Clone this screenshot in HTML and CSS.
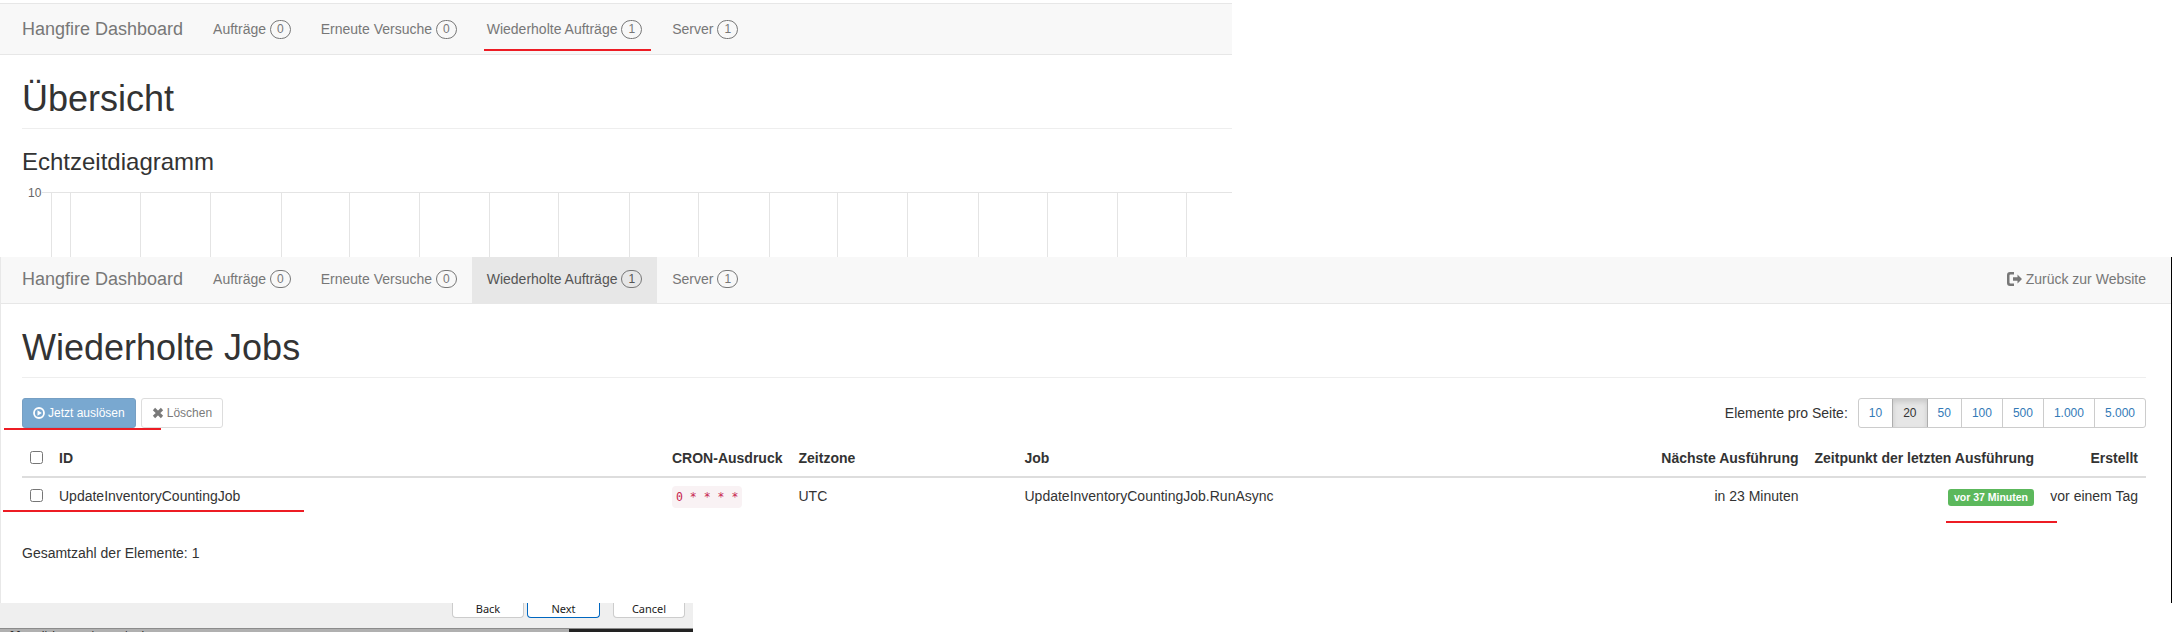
FILE: index.html
```html
<!DOCTYPE html>
<html lang="de">
<head>
<meta charset="utf-8">
<title>Hangfire Dashboard</title>
<link rel="stylesheet" href="styles.css">
</head>
<body>
<div class="canvas">
  <section class="shot shot-top">
    <nav class="navbar navbar-tall">
      <a class="brand">Hangfire Dashboard</a>
      <ul class="nav">
        <li><a>Aufträge <span class="metric">0</span></a></li>
        <li><a>Erneute Versuche <span class="metric">0</span></a></li>
        <li><a>Wiederholte Aufträge <span class="metric">1</span></a></li>
        <li><a>Server <span class="metric">1</span></a></li>
      </ul>
    </nav>
    <div class="content">
      <h1 class="page-title">Übersicht</h1>
      <h3 class="section-title">Echtzeitdiagramm</h3>
      <svg class="chart" width="1232" height="65" viewBox="0 0 1232 65">
        <text class="chart-label" x="28" y="4.500">10</text>
        <path class="chart-grid" d="M42 .5H1232M51.5 0V65M70.5 0V65M140.5 0V65M210.5 0V65M281.5 0V65M349.5 0V65M419.5 0V65M489.5 0V65M558.5 0V65M629.5 0V65M698.5 0V65M769.5 0V65M837.5 0V65M907.5 0V65M978.5 0V65M1047.5 0V65M1117.5 0V65M1186.5 0V65"/>
      </svg>
    </div>
  </section>

  <section class="shot shot-main">
    <nav class="navbar navbar-short">
      <a class="brand">Hangfire Dashboard</a>
      <ul class="nav">
        <li><a>Aufträge <span class="metric">0</span></a></li>
        <li><a>Erneute Versuche <span class="metric">0</span></a></li>
        <li class="active"><a>Wiederholte Aufträge <span class="metric">1</span></a></li>
        <li><a>Server <span class="metric">1</span></a></li>
      </ul>
      <a class="back-link">
        <svg class="icon-out" width="15" height="14" viewBox="0 0 15 14"><path d="M0 3a3 3 0 0 1 3-3h4v2.500H3.500a1 1 0 0 0-1 1v7a1 1 0 0 0 1 1H7V14H3a3 3 0 0 1-3-3z"/><path d="M6 5.200h4.500V2.500L15 7l-4.500 4.500V8.800H6z"/></svg>
        Zurück zur Website
      </a>
    </nav>
    <div class="content">
      <h1 class="page-title">Wiederholte Jobs</h1>
      <div class="toolbar">
        <div class="actions">
          <button class="btn btn-primary" type="button">
            <svg width="12" height="12" viewBox="0 0 12 12"><circle cx="6" cy="6" r="5" fill="none" stroke="#fff" stroke-width="1.8"/><path d="M4.500 3.200 8.800 6 4.500 8.800z" fill="#fff"/></svg>
            Jetzt auslösen
          </button>
          <button class="btn btn-default" type="button">
            <svg width="12" height="12" viewBox="0 0 12 12"><path d="M2 2l8 8M10 2l-8 8" stroke="#333" stroke-width="3.200" fill="none"/></svg>
            Löschen
          </button>
        </div>
        <div class="pager-wrap">
          <span class="pager-label">Elemente pro Seite:</span>
          <div class="pager">
            <a>10</a><a class="current">20</a><a>50</a><a>100</a><a>500</a><a>1.000</a><a>5.000</a>
          </div>
        </div>
      </div>
      <table class="jobs">
        <colgroup>
          <col class="c-check"><col class="c-id"><col class="c-cron"><col class="c-zone"><col class="c-job"><col class="c-next"><col class="c-last"><col class="c-made">
        </colgroup>
        <thead>
          <tr>
            <th><input type="checkbox"></th>
            <th>ID</th>
            <th>CRON-Ausdruck</th>
            <th>Zeitzone</th>
            <th>Job</th>
            <th class="right">Nächste Ausführung</th>
            <th class="right">Zeitpunkt der letzten Ausführung</th>
            <th class="right">Erstellt</th>
          </tr>
        </thead>
        <tbody>
          <tr>
            <td><input type="checkbox"></td>
            <td>UpdateInventoryCountingJob</td>
            <td><code>0 * * * *</code></td>
            <td>UTC</td>
            <td>UpdateInventoryCountingJob.RunAsync</td>
            <td class="right">in 23 Minuten</td>
            <td class="right"><span class="label-success">vor 37 Minuten</span></td>
            <td class="right">vor einem Tag</td>
          </tr>
        </tbody>
      </table>
      <p class="total">Gesamtzahl der Elemente: 1</p>
    </div>
  </section>

  <section class="dialog">
    <div class="dialog-actions">
      <button class="wiz" type="button">Back</button>
      <button class="wiz wiz-next" type="button">Next</button>
      <button class="wiz wiz-cancel" type="button">Cancel</button>
    </div>
    <div class="dialog-strip">
      <span class="strip-text">of free disk space is required.</span>
      <span class="strip-dark"></span>
    </div>
  </section>

  <i class="mark mark-nav"></i>
  <i class="mark mark-btn"></i>
  <i class="mark mark-row"></i>
  <i class="mark mark-label"></i>
</div>
</body>
</html>
```
FILE: styles.css
```css
* { box-sizing: border-box; }
html, body { margin: 0; background: #fff; }
body { font: 14px/20px "Liberation Sans", Arial, sans-serif; color: #333; }

.canvas { position: relative; width: 2172px; height: 632px; overflow: hidden; }

.shot { overflow: hidden; background: #fff; }
.shot-top { width: 1232px; height: 257px; padding-top: 3px; }
.shot-main { width: 2172px; height: 346px; border-left: 1px solid #e8e8e8; border-right: 1px solid #000; }

.navbar { display: flex; align-items: stretch; background: #f8f8f8; padding-left: 7px; border-bottom: 1px solid #e7e7e7; color: #777; }
.navbar-tall { height: 52px; border-top: 1px solid #e7e7e7; }
.navbar-short { height: 47px; padding-left: 6px; padding-right: 25px; }

.brand { display: flex; align-items: center; padding: 0 15px; font-size: 18px; }
.nav { display: flex; list-style: none; margin: 0; padding: 0; }
.nav li { display: flex; }
.nav a { display: flex; align-items: center; gap: 4px; padding: 0 15px; }
.navbar-short .brand, .navbar-short .nav a { padding-bottom: 3px; }
.active { background: #e7e7e7; }
.active a { color: #555; }
.metric { display: inline-block; height: 19px; padding: 0 6px; border: 1px solid #777; border-radius: 10px; font-size: 12px; line-height: 17px; }
.navbar-short .metric { height: 18px; line-height: 16px; }
.back-link { display: flex; align-items: center; gap: 4px; margin-left: auto; padding-bottom: 3px; }
.icon-out { fill: #777; }

.content { padding: 0 26px 0 22px; }
.shot-top .content { padding-right: 0; }
.shot-main .content { padding-left: 21px; padding-right: 25px; }

.page-title { margin: 24px 0 20px; padding-bottom: 9px; border-bottom: 1px solid #eee; font-size: 36px; font-weight: 400; line-height: 39.6px; }
.section-title { margin: 0 0 17px; font-size: 24px; font-weight: 400; line-height: 26.4px; }

.chart { display: block; margin-left: -22px; overflow: visible; }
.chart-grid { stroke: #e4e4e4; stroke-width: 1; fill: none; }
.chart-label { fill: #666; font-size: 12px; font-family: "Liberation Sans", Arial, sans-serif; }

.toolbar { display: flex; justify-content: space-between; margin-bottom: 12px; }
.actions { display: flex; gap: 5px; }
.btn { display: flex; align-items: center; gap: 3px; height: 30px; padding: 0 10px; border: 1px solid transparent; border-radius: 3px; font: 12px/18px "Liberation Sans", Arial, sans-serif; opacity: .65; }
.btn-primary { background: #337ab7; border-color: #2e6da4; color: #fff; }
.btn-default { background: #fff; border-color: #ccc; color: #333; }

.pager-wrap { display: flex; align-items: center; gap: 10px; }
.pager { display: flex; height: 30px; border: 1px solid #ccc; border-radius: 3px; font-size: 12px; color: #337ab7; }
.pager a { display: flex; align-items: center; padding: 0 10px; border-left: 1px solid #ccc; }
.pager a:first-child { border-left: 0; }
.pager .current { background: #e6e6e6; color: #333; border-left-color: #adadad; border-right: 1px solid #adadad; margin-right: -1px; box-shadow: inset 0 3px 5px rgba(0, 0, 0, .125); }
.pager .current + a { border-left: 0; padding-left: 11px; }

.jobs { width: 2124px; table-layout: fixed; border-collapse: collapse; }
.jobs th, .jobs td { padding: 8px; text-align: left; vertical-align: top; white-space: nowrap; }
.jobs th { border-bottom: 2px solid #ddd; font-weight: 700; }
.jobs .right { text-align: right; }
.jobs input { display: block; width: 13px; height: 13px; margin: 3px 0 0; }
.c-check { width: 29px; }
.c-id { width: 613px; }
.c-cron { width: 126.5px; }
.c-zone { width: 226px; }
.c-job { width: 634px; }
.c-next { width: 156px; }
.c-last { width: 235.500px; }
.c-made { width: 104px; }

code { padding: 4px 4px; border-radius: 4px; background: #f9f2f4; color: #c7254e; font: 11.500px "DejaVu Sans Mono", monospace; }
.label-success { display: inline-block; padding: 2px 6px 3px; border-radius: 3px; background: #5cb85c; color: #fff; font-size: 10.500px; font-weight: 700; line-height: 12px; vertical-align: top; margin-top: 3px; }

.total { margin: 29px 0 0; }

.dialog { width: 693px; height: 29px; background: #efefef; }
.dialog-actions { display: flex; justify-content: flex-end; height: 25px; padding-right: 8px; }
.wiz { width: 72px; height: 15px; padding: 0 0 3px; border: 1px solid #ccc; border-top: 0; border-radius: 0 0 4px 4px; background: #fff; color: #1a1a1a; font: 11px/11px "Noto Sans", sans-serif; }
.wiz-next { width: 73px; margin-left: 3px; border-color: #0067c0; }
.wiz-cancel { margin-left: 13px; }
.dialog-strip { display: flex; height: 4px; overflow: hidden; border-top: 1px solid #8c8c8c; }
.strip-text { display: block; flex: 0 0 569px; height: 3px; padding-left: 3px; overflow: hidden; background: #b0b0b0; color: #111; font: 10.500px/12px "Noto Sans", sans-serif; }
.strip-dark { flex: 1; background: #222; }

.mark { position: absolute; height: 2px; background: #ed1c24; }
.mark-nav { left: 484px; top: 49px; width: 167px; }
.mark-btn { left: 4px; top: 428px; width: 157px; }
.mark-row { left: 3px; top: 510px; width: 301px; }
.mark-label { left: 1946px; top: 521px; width: 111px; }
```
